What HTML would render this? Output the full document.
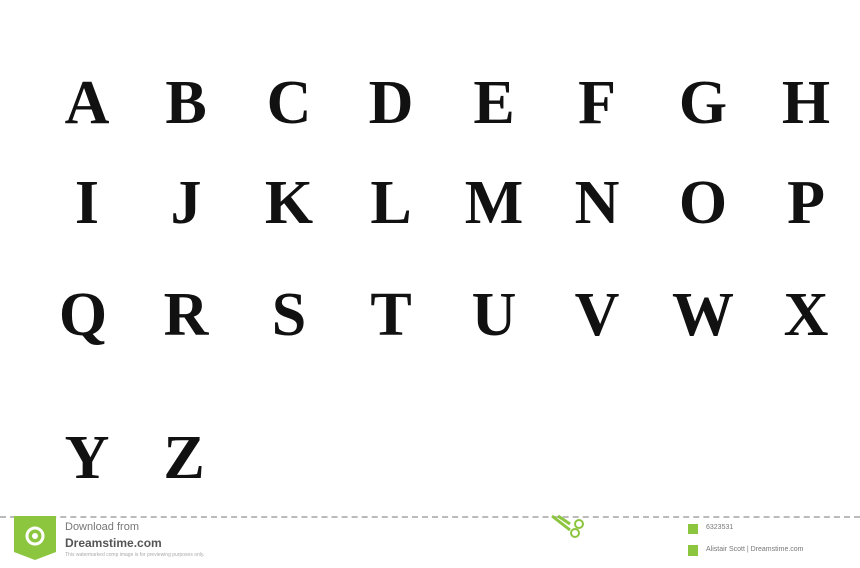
<!DOCTYPE html>
<html><head><meta charset="utf-8"><style>
html,body{margin:0;padding:0;background:#fff;width:860px;height:568px;overflow:hidden;position:relative}
.l{position:absolute;width:100px;text-align:center;font-family:"Liberation Serif",serif;font-weight:bold;font-size:62px;line-height:60px;color:#111}
.bar{position:absolute;left:0;top:516px;width:860px;border-top:2px dashed #bbb}
.t{position:absolute;font-family:"Liberation Sans",sans-serif;color:#777}
</style></head><body>
<div class="l" style="left:37px;top:73px">A</div>
<div class="l" style="left:136px;top:73px">B</div>
<div class="l" style="left:239px;top:73px">C</div>
<div class="l" style="left:341px;top:73px">D</div>
<div class="l" style="left:444px;top:73px">E</div>
<div class="l" style="left:547px;top:73px">F</div>
<div class="l" style="left:653px;top:73px">G</div>
<div class="l" style="left:756px;top:73px">H</div>
<div class="l" style="left:37px;top:173px">I</div>
<div class="l" style="left:136px;top:173px">J</div>
<div class="l" style="left:239px;top:173px">K</div>
<div class="l" style="left:341px;top:173px">L</div>
<div class="l" style="left:444px;top:173px">M</div>
<div class="l" style="left:547px;top:173px">N</div>
<div class="l" style="left:653px;top:173px">O</div>
<div class="l" style="left:756px;top:173px">P</div>
<div class="l" style="left:33px;top:285px">Q</div>
<div class="l" style="left:136px;top:285px">R</div>
<div class="l" style="left:239px;top:285px">S</div>
<div class="l" style="left:341px;top:285px">T</div>
<div class="l" style="left:444px;top:285px">U</div>
<div class="l" style="left:547px;top:285px">V</div>
<div class="l" style="left:653px;top:285px">W</div>
<div class="l" style="left:756px;top:285px">X</div>
<div class="l" style="left:37px;top:428px">Y</div>
<div class="l" style="left:134px;top:428px">Z</div>
<div class="bar"></div>
<svg style="position:absolute;left:8px;top:516px" width="50" height="46"><path d="M6 0H48V36L27 44L6 36Z" fill="#8cc63f"/><circle cx="27" cy="20" r="8" fill="none" stroke="#fff" stroke-width="3"/><circle cx="27" cy="20" r="3" fill="#fff"/></svg>
<div class="t" style="left:65px;top:521px;font-size:11px">Download from</div>
<div class="t" style="left:65px;top:536px;font-size:12px;font-weight:bold;color:#555">Dreamstime.com</div>
<div class="t" style="left:65px;top:552px;font-size:5px;color:#aaa">This watermarked comp image is for previewing purposes only.</div>
<svg style="position:absolute;left:548px;top:514px" width="40" height="26"><path d="M4 2L22 16M10 2L22 10" stroke="#8cc63f" stroke-width="3" fill="none"/><circle cx="27" cy="19" r="4" fill="none" stroke="#8cc63f" stroke-width="2"/><circle cx="31" cy="10" r="4" fill="none" stroke="#8cc63f" stroke-width="2"/></svg>
<div style="position:absolute;left:688px;top:524px;width:10px;height:10px;background:#8cc63f"></div>
<div class="t" style="left:706px;top:524px;font-size:7px">6323531</div>
<div style="position:absolute;left:688px;top:545px;width:10px;height:11px;background:#8cc63f"></div>
<div class="t" style="left:706px;top:546px;font-size:7px">Alistair Scott | Dreamstime.com</div>
</body></html>
